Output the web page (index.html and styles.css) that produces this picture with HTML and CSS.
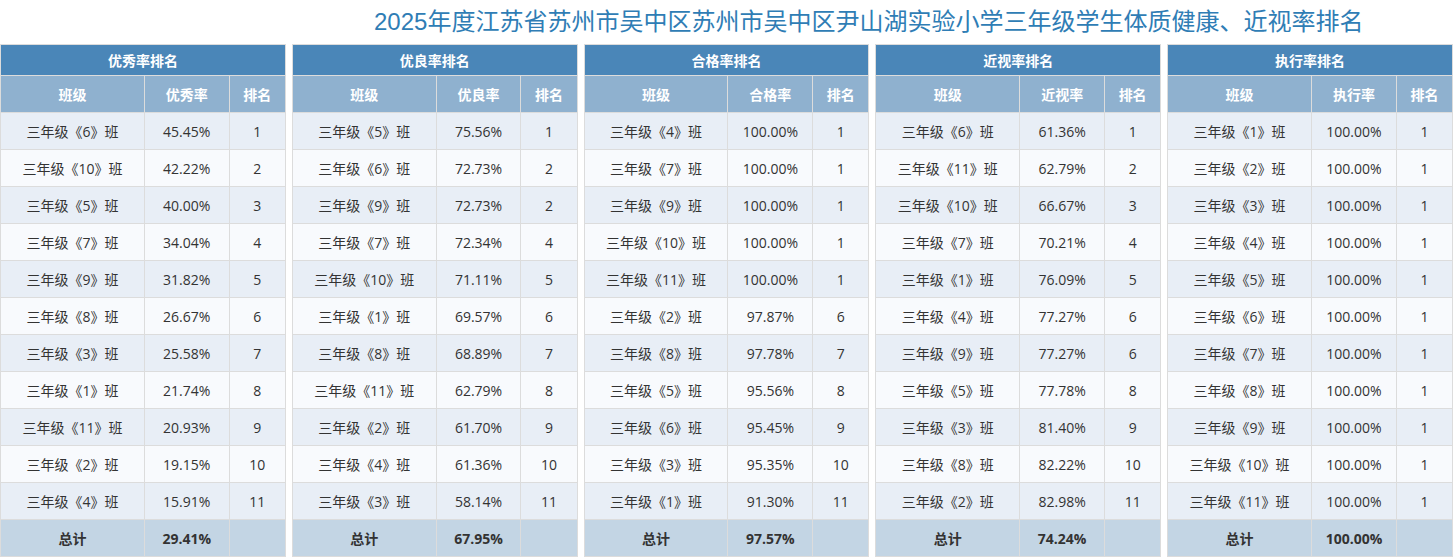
FILE: index.html
```html
<!DOCTYPE html>
<html lang="zh-CN">
<head>
<meta charset="utf-8">
<title>排名</title>
<link rel="stylesheet" href="styles.css">
</head>
<body>
<div class="title">2025年度江苏省苏州市吴中区苏州市吴中区尹山湖实验小学三年级学生体质健康、近视率排名</div>
<div class="boards">
<table class="rank">
<colgroup><col class="c1"><col class="c2"><col class="c3"></colgroup>
<tr class="h1"><th colspan="3">优秀率排名</th></tr>
<tr class="h2"><th>班级</th><th>优秀率</th><th>排名</th></tr>
<tr><td>三年级《6》班</td><td>45.45%</td><td>1</td></tr>
<tr><td>三年级《10》班</td><td>42.22%</td><td>2</td></tr>
<tr><td>三年级《5》班</td><td>40.00%</td><td>3</td></tr>
<tr><td>三年级《7》班</td><td>34.04%</td><td>4</td></tr>
<tr><td>三年级《9》班</td><td>31.82%</td><td>5</td></tr>
<tr><td>三年级《8》班</td><td>26.67%</td><td>6</td></tr>
<tr><td>三年级《3》班</td><td>25.58%</td><td>7</td></tr>
<tr><td>三年级《1》班</td><td>21.74%</td><td>8</td></tr>
<tr><td>三年级《11》班</td><td>20.93%</td><td>9</td></tr>
<tr><td>三年级《2》班</td><td>19.15%</td><td>10</td></tr>
<tr><td>三年级《4》班</td><td>15.91%</td><td>11</td></tr>
<tr class="total"><td>总计</td><td>29.41%</td><td></td></tr>
</table>
<table class="rank">
<colgroup><col class="c1"><col class="c2"><col class="c3"></colgroup>
<tr class="h1"><th colspan="3">优良率排名</th></tr>
<tr class="h2"><th>班级</th><th>优良率</th><th>排名</th></tr>
<tr><td>三年级《5》班</td><td>75.56%</td><td>1</td></tr>
<tr><td>三年级《6》班</td><td>72.73%</td><td>2</td></tr>
<tr><td>三年级《9》班</td><td>72.73%</td><td>2</td></tr>
<tr><td>三年级《7》班</td><td>72.34%</td><td>4</td></tr>
<tr><td>三年级《10》班</td><td>71.11%</td><td>5</td></tr>
<tr><td>三年级《1》班</td><td>69.57%</td><td>6</td></tr>
<tr><td>三年级《8》班</td><td>68.89%</td><td>7</td></tr>
<tr><td>三年级《11》班</td><td>62.79%</td><td>8</td></tr>
<tr><td>三年级《2》班</td><td>61.70%</td><td>9</td></tr>
<tr><td>三年级《4》班</td><td>61.36%</td><td>10</td></tr>
<tr><td>三年级《3》班</td><td>58.14%</td><td>11</td></tr>
<tr class="total"><td>总计</td><td>67.95%</td><td></td></tr>
</table>
<table class="rank">
<colgroup><col class="c1"><col class="c2"><col class="c3"></colgroup>
<tr class="h1"><th colspan="3">合格率排名</th></tr>
<tr class="h2"><th>班级</th><th>合格率</th><th>排名</th></tr>
<tr><td>三年级《4》班</td><td>100.00%</td><td>1</td></tr>
<tr><td>三年级《7》班</td><td>100.00%</td><td>1</td></tr>
<tr><td>三年级《9》班</td><td>100.00%</td><td>1</td></tr>
<tr><td>三年级《10》班</td><td>100.00%</td><td>1</td></tr>
<tr><td>三年级《11》班</td><td>100.00%</td><td>1</td></tr>
<tr><td>三年级《2》班</td><td>97.87%</td><td>6</td></tr>
<tr><td>三年级《8》班</td><td>97.78%</td><td>7</td></tr>
<tr><td>三年级《5》班</td><td>95.56%</td><td>8</td></tr>
<tr><td>三年级《6》班</td><td>95.45%</td><td>9</td></tr>
<tr><td>三年级《3》班</td><td>95.35%</td><td>10</td></tr>
<tr><td>三年级《1》班</td><td>91.30%</td><td>11</td></tr>
<tr class="total"><td>总计</td><td>97.57%</td><td></td></tr>
</table>
<table class="rank">
<colgroup><col class="c1"><col class="c2"><col class="c3"></colgroup>
<tr class="h1"><th colspan="3">近视率排名</th></tr>
<tr class="h2"><th>班级</th><th>近视率</th><th>排名</th></tr>
<tr><td>三年级《6》班</td><td>61.36%</td><td>1</td></tr>
<tr><td>三年级《11》班</td><td>62.79%</td><td>2</td></tr>
<tr><td>三年级《10》班</td><td>66.67%</td><td>3</td></tr>
<tr><td>三年级《7》班</td><td>70.21%</td><td>4</td></tr>
<tr><td>三年级《1》班</td><td>76.09%</td><td>5</td></tr>
<tr><td>三年级《4》班</td><td>77.27%</td><td>6</td></tr>
<tr><td>三年级《9》班</td><td>77.27%</td><td>6</td></tr>
<tr><td>三年级《5》班</td><td>77.78%</td><td>8</td></tr>
<tr><td>三年级《3》班</td><td>81.40%</td><td>9</td></tr>
<tr><td>三年级《8》班</td><td>82.22%</td><td>10</td></tr>
<tr><td>三年级《2》班</td><td>82.98%</td><td>11</td></tr>
<tr class="total"><td>总计</td><td>74.24%</td><td></td></tr>
</table>
<table class="rank">
<colgroup><col class="c1"><col class="c2"><col class="c3"></colgroup>
<tr class="h1"><th colspan="3">执行率排名</th></tr>
<tr class="h2"><th>班级</th><th>执行率</th><th>排名</th></tr>
<tr><td>三年级《1》班</td><td>100.00%</td><td>1</td></tr>
<tr><td>三年级《2》班</td><td>100.00%</td><td>1</td></tr>
<tr><td>三年级《3》班</td><td>100.00%</td><td>1</td></tr>
<tr><td>三年级《4》班</td><td>100.00%</td><td>1</td></tr>
<tr><td>三年级《5》班</td><td>100.00%</td><td>1</td></tr>
<tr><td>三年级《6》班</td><td>100.00%</td><td>1</td></tr>
<tr><td>三年级《7》班</td><td>100.00%</td><td>1</td></tr>
<tr><td>三年级《8》班</td><td>100.00%</td><td>1</td></tr>
<tr><td>三年级《9》班</td><td>100.00%</td><td>1</td></tr>
<tr><td>三年级《10》班</td><td>100.00%</td><td>1</td></tr>
<tr><td>三年级《11》班</td><td>100.00%</td><td>1</td></tr>
<tr class="total"><td>总计</td><td>100.00%</td><td></td></tr>
</table>
</div>
</body>
</html>
```
FILE: styles.css
```css
html, body {
  margin: 0;
  padding: 0;
  background: #fff;
}
body {
  font-family: "Open Sans", "Noto Sans CJK SC", sans-serif;
  color: #333;
}
.title {
  height: 44px;
  box-sizing: border-box;
  padding: 6px 0 0 374px;
  font-family: "Liberation Sans", "Noto Sans CJK SC", sans-serif;
  font-size: 24px;
  line-height: 32px;
  color: #2f7db5;
  white-space: nowrap;
}
.boards {
  display: grid;
  grid-template-columns: repeat(5, 1fr);
  column-gap: 6px;
}
.rank {
  width: 100%;
  border-collapse: collapse;
  table-layout: fixed;
  border: 1px solid #dcdcdc;
  font-size: 14px;
}
.c1 { width: 50.5%; }
.c2 { width: 29.8%; }
.c3 { width: 19.7%; }
.rank th, .rank td {
  border: 1px solid #dcdcdc;
  text-align: center;
  padding: 0;
  white-space: nowrap;
}
.rank th {
  color: #fff;
  font-weight: bold;
  font-family: "Noto Sans CJK SC", sans-serif;
  font-size: 14px;
}
.h1 { height: 31px; }
.h1 th { background: #4a86b8; }
.h2 { height: 37px; }
.h2 th { background: #8fb1cf; }
.rank tr { height: 37px; }
.rank tr.h1 { height: 31px; }
.rank tr:nth-child(odd) td { background: #e8eef6; }
.rank tr:nth-child(even) td { background: #f8fafd; }
.rank tr.total td {
  background: #c3d5e4;
  font-weight: bold;
}
```
